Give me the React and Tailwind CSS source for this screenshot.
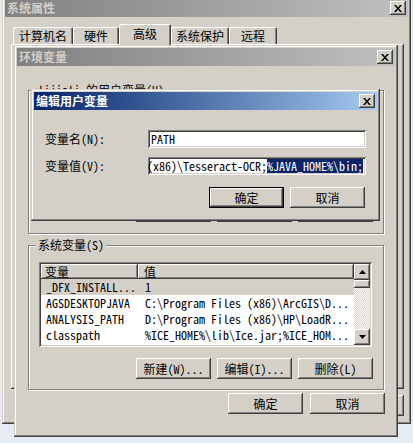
import React from "react";

const raised =
  "shadow-[inset_-1px_-1px_0_#404040,inset_1px_1px_0_#ffffff,inset_-2px_-2px_0_#808080,inset_2px_2px_0_#d4d0c8]";
const frame =
  "shadow-[inset_-1px_-1px_0_#404040,inset_1px_1px_0_#d4d0c8,inset_-2px_-2px_0_#808080,inset_2px_2px_0_#ffffff]";
const sunken =
  "shadow-[inset_1px_1px_0_#808080,inset_-1px_-1px_0_#ffffff,inset_2px_2px_0_#404040,inset_-2px_-2px_0_#d4d0c8]";

function CloseBtn() {
  return (
    <div className={`flex h-[14px] w-[16px] items-center justify-center bg-[#d4d0c8] ${raised}`}>
      <svg width="8" height="7" viewBox="0 0 8 7">
        <path d="M0 0H2L4 2.4L6 0H8L5 3.5L8 7H6L4 4.6L2 7H0L3 3.5Z" fill="#000" />
      </svg>
    </div>
  );
}

function TitleBar({ title, active }) {
  return (
    <div
      className={`flex h-[18px] shrink-0 items-center justify-between pl-[2px] pr-[2px] ${
        active
          ? "bg-linear-to-r from-[#0a246a] to-[#a6caf0] text-white"
          : "bg-linear-to-r from-[#808080] to-[#c0c0c0] text-[#d4d0c8]"
      }`}
    >
      <span className="text-[12px] font-bold leading-none">{title}</span>
      <CloseBtn />
    </div>
  );
}

function Btn({ children, def }) {
  return (
    <div
      className={`flex h-[21px] w-[75px] shrink-0 items-center justify-center bg-[#d4d0c8] text-[12px] leading-none text-black ${
        def
          ? "border border-black shadow-[inset_-1px_-1px_0_#404040,inset_1px_1px_0_#ffffff,inset_-2px_-2px_0_#808080]"
          : raised
      }`}
    >
      {children}
    </div>
  );
}

function Group({ label, className, children }) {
  return (
    <div
      className={`relative border border-[#808080] shadow-[1px_1px_0_#ffffff,inset_1px_1px_0_#ffffff] ${className}`}
    >
      <span className="absolute -top-[7px] left-[7px] bg-[#d4d0c8] px-[2px] text-[12px] leading-none text-black">
        {label}
      </span>
      {children}
    </div>
  );
}

const sysRows = [
  ["_DFX_INSTALL...", "1"],
  ["AGSDESKTOPJAVA", "C:\\Program Files (x86)\\ArcGIS\\D..."],
  ["ANALYSIS_PATH", "D:\\Program Files (x86)\\HP\\LoadR..."],
  ["classpath", "%ICE_HOME%\\lib\\Ice.jar;%ICE_HOM..."],
];

function Arrow({ down }) {
  return (
    <div className={`flex h-[16px] w-[16px] shrink-0 items-center justify-center bg-[#d4d0c8] ${raised}`}>
      <svg width="7" height="4" viewBox="0 0 7 4">
        <path d={down ? "M0 0H7L3.5 4Z" : "M3.5 0L7 4H0Z"} fill="#000" />
      </svg>
    </div>
  );
}

function ListView() {
  return (
    <div className={`flex h-[85px] w-[333px] bg-white p-[2px] ${sunken}`}>
      <div className="flex-1 overflow-hidden">
        <div className="flex h-[15px] text-[12px] leading-none text-black">
          <div className={`flex w-[97px] items-center bg-[#d4d0c8] pl-[4px] ${raised}`}>变量</div>
          <div className={`flex flex-1 items-center bg-[#d4d0c8] pl-[6px] ${raised}`}>值</div>
        </div>
        {sysRows.map((r, i) => (
          <div
            key={r[0]}
            className={`flex h-[16px] items-center whitespace-nowrap text-[12px] leading-none text-black ${
              i === 0 ? "bg-[#d4d0c8]" : ""
            }`}
          >
            <div className="w-[97px] pl-[5px]">{r[0]}</div>
            <div className="pl-[7px]">{r[1]}</div>
          </div>
        ))}
      </div>
      <div className="flex w-[16px] flex-col">
        <Arrow />
        <div className={`h-[8px] bg-[#d4d0c8] ${raised}`} />
        <div className="flex-1 bg-[image:repeating-conic-gradient(#d4d0c8_0_25%,#ffffff_0_50%)] bg-[length:2px_2px]" />
        <Arrow down />
      </div>
    </div>
  );
}

function Tab({ children, w, active }) {
  return (
    <div
      className={`flex shrink-0 items-center justify-center rounded-t-[2px] bg-[#d4d0c8] text-[12px] leading-none text-black shadow-[inset_1px_1px_0_#ffffff,inset_-1px_0_0_#404040,inset_-2px_0_0_#808080] ${w} ${
        active ? "relative z-10 -mb-[2px] h-[22px] pb-[3px]" : "h-[17px] pt-[1px]"
      }`}
    >
      {children}
    </div>
  );
}

export default function App() {
  return (
    <div className="relative h-[443px] w-[413px] overflow-hidden bg-[#e4ebf4] font-['Noto_Sans_Mono_CJK_SC','Noto_Sans_CJK_SC',monospace]">
      <div className="absolute left-0 top-0 h-[390px] w-[3px] bg-[#e8e8e8]" />

      {/* 系统属性 */}
      <div className={`absolute left-[2px] top-[-4px] flex h-[428px] w-[409px] flex-col bg-[#d4d0c8] p-[3px] ${frame}`}>
        <TitleBar title="系统属性" />
        <div className="mt-[7px] flex h-[20px] items-end pl-[8px]">
          <Tab w="w-[60px]">计算机名</Tab>
          <Tab w="w-[46px]">硬件</Tab>
          <Tab w="w-[52px]" active>
            高级
          </Tab>
          <Tab w="w-[58px]">系统保护</Tab>
          <Tab w="w-[48px]">远程</Tab>
        </div>
        <div className={`ml-[6px] mr-[4px] h-[345px] bg-[#d4d0c8] ${raised}`} />
        <div className="mr-[4px] mt-[6px] flex justify-end gap-[6px]">
          <Btn>确定</Btn>
          <Btn>取消</Btn>
          <Btn>应用(A)</Btn>
        </div>
      </div>

      {/* 环境变量 */}
      <div className={`absolute left-[14px] top-[45px] z-10 flex h-[392px] w-[384px] flex-col bg-[#d4d0c8] p-[3px] ${frame}`}>
        <TitleBar title="环境变量" />
        <Group label="lijiali 的用户变量(U)" className="mx-[11px] mt-[24px] flex h-[144px] flex-col justify-end pb-[11px] pr-[10px]">
          <div className="flex justify-end gap-[6px]">
            <Btn>新建(N)...</Btn>
            <Btn>编辑(E)...</Btn>
            <Btn>删除(D)</Btn>
          </div>
        </Group>
        <Group label="系统变量(S)" className="mx-[11px] mt-[11px] h-[145px] pl-[10px] pr-[10px] pt-[16px]">
          <ListView />
          <div className="mt-[11px] flex justify-end gap-[6px]">
            <Btn>新建(W)...</Btn>
            <Btn>编辑(I)...</Btn>
            <Btn>删除(L)</Btn>
          </div>
        </Group>
        <div className="mr-[10px] mt-[3px] flex justify-end gap-[7px]">
          <Btn>确定</Btn>
          <Btn>取消</Btn>
        </div>
      </div>

      {/* 编辑用户变量 */}
      <div className={`absolute left-[31px] top-[89px] z-20 flex h-[132px] w-[349px] flex-col bg-[#d4d0c8] p-[3px] ${frame}`}>
        <TitleBar title="编辑用户变量" active />
        <div className="px-[11px]">
          <div className="mt-[20px] flex items-center">
            <div className="w-[103px] text-[12px] leading-none text-black">变量名(N):</div>
            <div className={`flex h-[18px] flex-1 items-center bg-white px-[3px] text-[12px] leading-none text-black ${sunken}`}>
              PATH
            </div>
          </div>
          <div className="mt-[9px] flex items-center">
            <div className="w-[103px] text-[12px] leading-none text-black">变量值(V):</div>
            <div className={`flex h-[18px] flex-1 justify-end overflow-hidden bg-white p-[2px] text-[12px] leading-none text-black ${sunken}`}>
              <span className="flex shrink-0 items-center whitespace-nowrap">
                {"C:\\Program Files (x86)\\Tesseract-OCR;"}
              </span>
              <span className="mr-[1px] flex shrink-0 items-center whitespace-nowrap bg-[#0a246a] text-white">
                {"%JAVA_HOME%\\bin;"}
              </span>
            </div>
          </div>
          <div className="mt-[12px] flex justify-end gap-[6px] pr-[1px]">
            <Btn def>确定</Btn>
            <Btn>取消</Btn>
          </div>
        </div>
      </div>
    </div>
  );
}
